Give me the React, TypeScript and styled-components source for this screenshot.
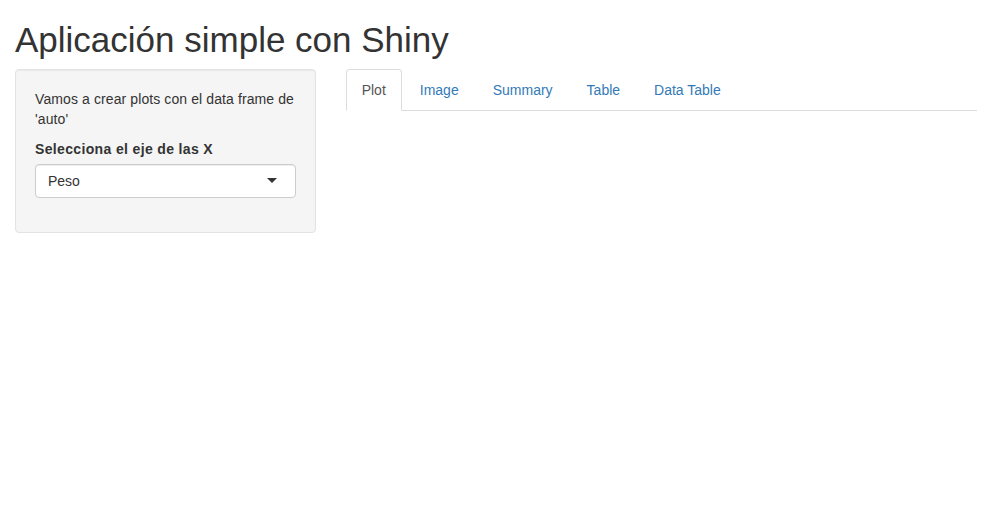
import React from "react";
import styled, { createGlobalStyle } from "styled-components";

const Global = createGlobalStyle`
  * { box-sizing: border-box; }
  html, body { margin: 0; padding: 0; background: #fff; }
  body {
    font-family: "Liberation Sans", Arial, Helvetica, sans-serif;
    font-size: 14px;
    line-height: 1.42857143;
    color: #333;
  }
`;

const Container = styled.div`
  padding: 0 15px;
`;

const Title = styled.h2`
  font-size: 35px;
  font-weight: 500;
  line-height: 39px;
  margin: 20px 0 10px;
  color: #333;
`;

const Row = styled.div`
  display: grid;
  grid-template-columns: 1fr 2fr;
  margin: 0 -15px;
`;

const Col = styled.div`
  padding: 0 15px;
  min-width: 0;
`;

const Well = styled.form`
  min-height: 20px;
  padding: 19px;
  margin-bottom: 20px;
  background: #f5f5f5;
  border: 1px solid #e3e3e3;
  border-radius: 4px;
  box-shadow: inset 0 1px 1px rgba(0, 0, 0, 0.05);
`;

const Para = styled.p`
  margin: 0 0 10px;
  letter-spacing: 0.1px;
`;

const FormGroup = styled.div`
  margin-bottom: 15px;
`;

const Label = styled.label`
  display: inline-block;
  max-width: 100%;
  margin-bottom: 5px;
  font-weight: 700;
  letter-spacing: 0.35px;
`;

const SelectBox = styled.div`
  position: relative;
  height: 34px;
  padding: 6px 12px;
  background: #fff;
  border: 1px solid #ccc;
  border-radius: 4px;
  box-shadow: inset 0 1px 1px rgba(0, 0, 0, 0.075);
  color: #333;
  line-height: 20px;
`;

const Caret = styled.span`
  position: absolute;
  top: 50%;
  right: 18px;
  margin-top: -3px;
  width: 0;
  height: 0;
  border-style: solid;
  border-width: 5px 5px 0 5px;
  border-color: #333 transparent transparent transparent;
`;

const Tabs = styled.ul`
  display: flex;
  list-style: none;
  margin: 0;
  padding: 0;
  border-bottom: 1px solid #ddd;
`;

const TabItem = styled.li`
  margin-bottom: -1px;
`;

const TabLink = styled.a<{ $active?: boolean }>`
  display: block;
  margin-right: 2px;
  padding: 10px 15px;
  line-height: 1.42857143;
  border: 1px solid ${(p) => (p.$active ? "#ddd" : "transparent")};
  border-bottom-color: transparent;
  border-radius: 4px 4px 0 0;
  background: ${(p) => (p.$active ? "#fff" : "transparent")};
  color: ${(p) => (p.$active ? "#555" : "#337ab7")};
  text-decoration: none;
  cursor: pointer;
`;

const tabs = ["Plot", "Image", "Summary", "Table", "Data Table"];

export default function App() {
  return (
    <>
      <Global />
      <Container>
        <Title>Aplicación simple con Shiny</Title>
        <Row>
          <Col>
            <Well>
              <Para>Vamos a crear plots con el data frame de 'auto'</Para>
              <FormGroup>
                <Label>Selecciona el eje de las X</Label>
                <SelectBox>
                  Peso
                  <Caret />
                </SelectBox>
              </FormGroup>
            </Well>
          </Col>
          <Col>
            <Tabs>
              {tabs.map((t, i) => (
                <TabItem key={t}>
                  <TabLink $active={i === 0}>{t}</TabLink>
                </TabItem>
              ))}
            </Tabs>
          </Col>
        </Row>
      </Container>
    </>
  );
}
